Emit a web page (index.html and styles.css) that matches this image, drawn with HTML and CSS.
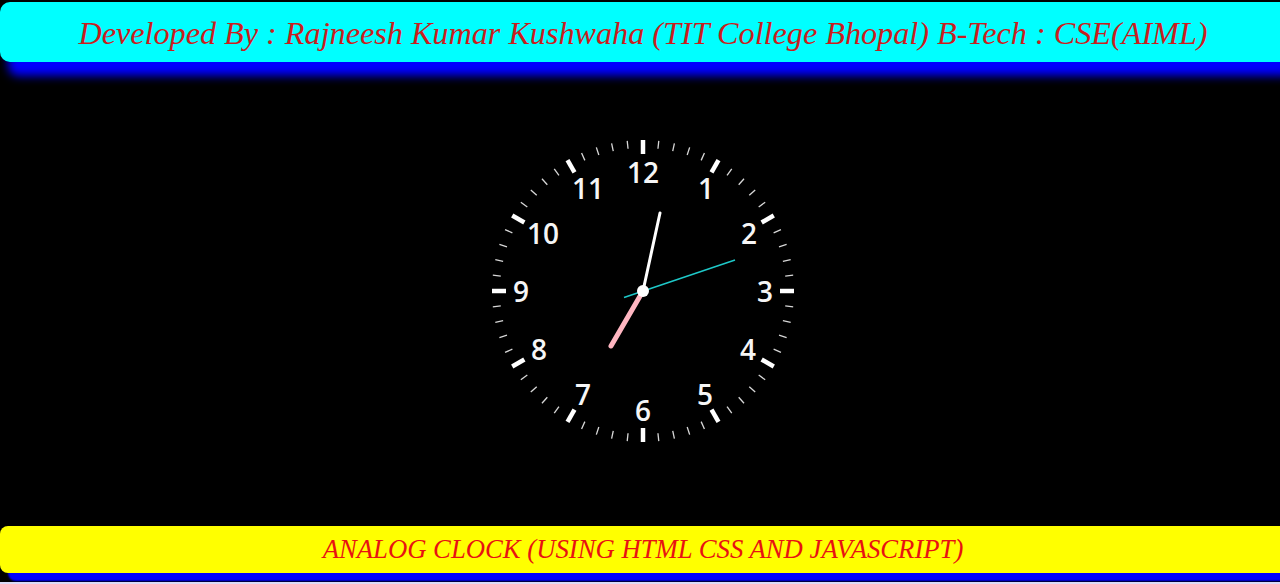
FILE: index.html
```html
<!DOCTYPE html>
<html lang="en">
<head>
<meta charset="utf-8">
<title>Analog Clock</title>
<link rel="stylesheet" href="styles.css">
</head>
<body>
<div class="page">
  <header class="top-bar">
    <h1 class="top-title">Developed By : Rajneesh Kumar Kushwaha (TIT College Bhopal) B-Tech : CSE(AIML)</h1>
  </header>
  <main class="stage">
    <svg class="clock" width="310" height="310" viewBox="0 0 310 310">
      <g class="minor">
        <line x1="155" y1="4" x2="155" y2="12" transform="rotate(6 155 155)"/>
        <line x1="155" y1="4" x2="155" y2="12" transform="rotate(12 155 155)"/>
        <line x1="155" y1="4" x2="155" y2="12" transform="rotate(18 155 155)"/>
        <line x1="155" y1="4" x2="155" y2="12" transform="rotate(24 155 155)"/>
        <line x1="155" y1="4" x2="155" y2="12" transform="rotate(36 155 155)"/>
        <line x1="155" y1="4" x2="155" y2="12" transform="rotate(42 155 155)"/>
        <line x1="155" y1="4" x2="155" y2="12" transform="rotate(48 155 155)"/>
        <line x1="155" y1="4" x2="155" y2="12" transform="rotate(54 155 155)"/>
        <line x1="155" y1="4" x2="155" y2="12" transform="rotate(66 155 155)"/>
        <line x1="155" y1="4" x2="155" y2="12" transform="rotate(72 155 155)"/>
        <line x1="155" y1="4" x2="155" y2="12" transform="rotate(78 155 155)"/>
        <line x1="155" y1="4" x2="155" y2="12" transform="rotate(84 155 155)"/>
        <line x1="155" y1="4" x2="155" y2="12" transform="rotate(96 155 155)"/>
        <line x1="155" y1="4" x2="155" y2="12" transform="rotate(102 155 155)"/>
        <line x1="155" y1="4" x2="155" y2="12" transform="rotate(108 155 155)"/>
        <line x1="155" y1="4" x2="155" y2="12" transform="rotate(114 155 155)"/>
        <line x1="155" y1="4" x2="155" y2="12" transform="rotate(126 155 155)"/>
        <line x1="155" y1="4" x2="155" y2="12" transform="rotate(132 155 155)"/>
        <line x1="155" y1="4" x2="155" y2="12" transform="rotate(138 155 155)"/>
        <line x1="155" y1="4" x2="155" y2="12" transform="rotate(144 155 155)"/>
        <line x1="155" y1="4" x2="155" y2="12" transform="rotate(156 155 155)"/>
        <line x1="155" y1="4" x2="155" y2="12" transform="rotate(162 155 155)"/>
        <line x1="155" y1="4" x2="155" y2="12" transform="rotate(168 155 155)"/>
        <line x1="155" y1="4" x2="155" y2="12" transform="rotate(174 155 155)"/>
        <line x1="155" y1="4" x2="155" y2="12" transform="rotate(186 155 155)"/>
        <line x1="155" y1="4" x2="155" y2="12" transform="rotate(192 155 155)"/>
        <line x1="155" y1="4" x2="155" y2="12" transform="rotate(198 155 155)"/>
        <line x1="155" y1="4" x2="155" y2="12" transform="rotate(204 155 155)"/>
        <line x1="155" y1="4" x2="155" y2="12" transform="rotate(216 155 155)"/>
        <line x1="155" y1="4" x2="155" y2="12" transform="rotate(222 155 155)"/>
        <line x1="155" y1="4" x2="155" y2="12" transform="rotate(228 155 155)"/>
        <line x1="155" y1="4" x2="155" y2="12" transform="rotate(234 155 155)"/>
        <line x1="155" y1="4" x2="155" y2="12" transform="rotate(246 155 155)"/>
        <line x1="155" y1="4" x2="155" y2="12" transform="rotate(252 155 155)"/>
        <line x1="155" y1="4" x2="155" y2="12" transform="rotate(258 155 155)"/>
        <line x1="155" y1="4" x2="155" y2="12" transform="rotate(264 155 155)"/>
        <line x1="155" y1="4" x2="155" y2="12" transform="rotate(276 155 155)"/>
        <line x1="155" y1="4" x2="155" y2="12" transform="rotate(282 155 155)"/>
        <line x1="155" y1="4" x2="155" y2="12" transform="rotate(288 155 155)"/>
        <line x1="155" y1="4" x2="155" y2="12" transform="rotate(294 155 155)"/>
        <line x1="155" y1="4" x2="155" y2="12" transform="rotate(306 155 155)"/>
        <line x1="155" y1="4" x2="155" y2="12" transform="rotate(312 155 155)"/>
        <line x1="155" y1="4" x2="155" y2="12" transform="rotate(318 155 155)"/>
        <line x1="155" y1="4" x2="155" y2="12" transform="rotate(324 155 155)"/>
        <line x1="155" y1="4" x2="155" y2="12" transform="rotate(336 155 155)"/>
        <line x1="155" y1="4" x2="155" y2="12" transform="rotate(342 155 155)"/>
        <line x1="155" y1="4" x2="155" y2="12" transform="rotate(348 155 155)"/>
        <line x1="155" y1="4" x2="155" y2="12" transform="rotate(354 155 155)"/>
      </g>
      <g class="major">
        <line x1="155" y1="4" x2="155" y2="18"/>
        <line x1="155" y1="4" x2="155" y2="18" transform="rotate(30 155 155)"/>
        <line x1="155" y1="4" x2="155" y2="18" transform="rotate(60 155 155)"/>
        <line x1="155" y1="4" x2="155" y2="18" transform="rotate(90 155 155)"/>
        <line x1="155" y1="4" x2="155" y2="18" transform="rotate(120 155 155)"/>
        <line x1="155" y1="4" x2="155" y2="18" transform="rotate(150 155 155)"/>
        <line x1="155" y1="4" x2="155" y2="18" transform="rotate(180 155 155)"/>
        <line x1="155" y1="4" x2="155" y2="18" transform="rotate(210 155 155)"/>
        <line x1="155" y1="4" x2="155" y2="18" transform="rotate(240 155 155)"/>
        <line x1="155" y1="4" x2="155" y2="18" transform="rotate(270 155 155)"/>
        <line x1="155" y1="4" x2="155" y2="18" transform="rotate(300 155 155)"/>
        <line x1="155" y1="4" x2="155" y2="18" transform="rotate(330 155 155)"/>
      </g>
      <g class="nums">
        <text x="155" y="36">12</text>
        <text x="218" y="52">1</text>
        <text x="261" y="97">2</text>
        <text x="277" y="155">3</text>
        <text x="260" y="213">4</text>
        <text x="217" y="258">5</text>
        <text x="155" y="274">6</text>
        <text x="95" y="258">7</text>
        <text x="51" y="213">8</text>
        <text x="33" y="155">9</text>
        <text x="55" y="97">10</text>
        <text x="100" y="52">11</text>
      </g>
      <line class="hand-hour" x1="155" y1="155" x2="123" y2="210"/>
      <line class="hand-min" x1="155" y1="155" x2="172" y2="77"/>
      <line class="hand-sec" x1="136" y1="161.5" x2="247" y2="124"/>
      <circle class="pin" cx="155" cy="155" r="6"/>
    </svg>
  </main>
  <footer class="bottom-bar">
    <p class="bottom-title">ANALOG CLOCK (USING HTML CSS AND JAVASCRIPT)</p>
  </footer>
</div>
</body>
</html>
```

FILE: styles.css
```css
html {
  background: #dcdcf8;
}
body {
  margin: 0;
  background: #000;
  height: 582px;
  overflow: hidden;
}
.page {
  width: 1286px;
  height: 582px;
  display: flex;
  flex-direction: column;
}
.top-bar {
  margin-top: 2px;
  height: 60px;
  background: #00ffff;
  border-radius: 10px 0 0 10px;
  box-shadow: 8px 14px 10px #0000ff;
  display: flex;
  align-items: center;
  justify-content: center;
  flex-shrink: 0;
}
.top-title {
  margin: 0;
  font-family: "Liberation Serif", "Times New Roman", serif;
  font-style: italic;
  font-weight: normal;
  font-size: 32.2px;
  color: #c81e1e;
  line-height: 1;
  padding-top: 2px;
}
.stage {
  flex: 1;
  display: flex;
  align-items: center;
  justify-content: center;
  padding-bottom: 6px;
}
.clock {
  display: block;
}
.minor line {
  stroke: #d8d8d8;
  stroke-width: 1.3;
}
.major line {
  stroke: #ffffff;
  stroke-width: 4.5;
}
.nums text {
  fill: #f6f6f6;
  font-family: "Open Sans", "Noto Sans", sans-serif;
  font-weight: 600;
  font-size: 28px;
  text-anchor: middle;
  dominant-baseline: central;
}
.hand-hour {
  stroke: #ffb6c1;
  stroke-width: 5;
  stroke-linecap: round;
}
.hand-min {
  stroke: #ffffff;
  stroke-width: 3;
  stroke-linecap: round;
}
.hand-sec {
  stroke: #1ec8c8;
  stroke-width: 1.5;
}
.pin {
  fill: #ffffff;
}
.bottom-bar {
  height: 47px;
  margin-bottom: 9px;
  background: #ffff00;
  border-radius: 8px 0 0 8px;
  box-shadow: 8px 8px 2px #0000ff;
  display: flex;
  align-items: center;
  justify-content: center;
  flex-shrink: 0;
}
.bottom-title {
  margin: 0;
  font-family: "Liberation Serif", "Times New Roman", serif;
  font-style: italic;
  font-size: 26.7px;
  color: #e81212;
  line-height: 1;
}
```
